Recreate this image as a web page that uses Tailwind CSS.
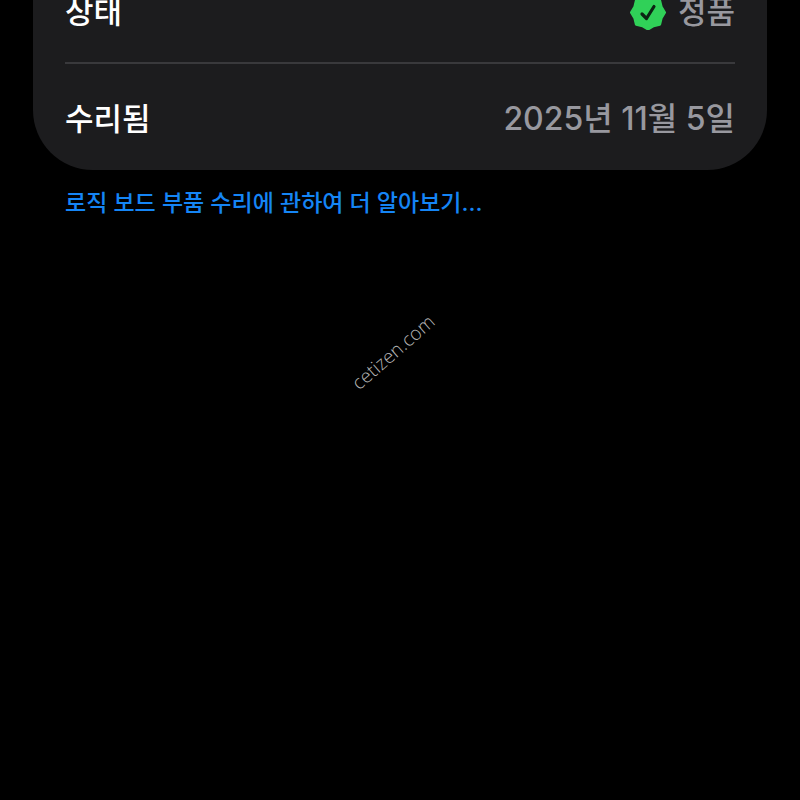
<!DOCTYPE html>
<html lang="ko">

<head>
  <meta charset="UTF-8" />
  <meta name="viewport" content="width=device-width, initial-scale=1.0" />
  <script src="https://cdn.jsdelivr.net/npm/@tailwindcss/browser@4"></script>
  <title>부품 및 서비스 기록</title>
</head>

<body class="relative min-h-screen overflow-hidden bg-black font-['Inter','Noto_Sans_CJK_KR',sans-serif] font-medium text-white">
  <main class="-mt-11 px-[33px]">
    <dl class="rounded-b-[60px] bg-[#1c1c1e] px-8 text-[31px] leading-10">
      <div class="flex items-center justify-between border-b-2 border-[#39393c] pt-9 pb-[30px]">
        <dt>상태</dt>
        <dd class="flex items-center gap-3 text-[#98989f]">
          <svg class="size-9" viewBox="-18 -18.5 36 36" aria-hidden="true">
            <path d="M16.5 0 13.2 5.5 11.7 11.7 5.5 13.2 0 16.5 -5.5 13.2 -11.7 11.7 -13.2 5.5 -16.5 0 -13.2 -5.5 -11.7 -11.7 -5.5 -13.2 0 -16.5 5.5 -13.2 11.7 -11.7 13.2 -5.5Z" fill="#30d158" stroke="#30d158" stroke-width="3" stroke-linejoin="round" />
            <path d="M-6 1.5 -1.5 6 6 -6" fill="none" stroke="#0c2413" stroke-width="3.2" stroke-linecap="round" stroke-linejoin="round" />
          </svg>
          정품
        </dd>
      </div>
      <div class="flex items-center justify-between pt-[35px] pb-[31px]">
        <dt>수리됨</dt>
        <dd class="text-[32px] text-[#98989f]">2025년 11월 5일</dd>
      </div>
    </dl>
    <p class="px-8 pt-[17px] text-[23px] leading-8">
      <a href="#" class="text-[#1585f5]">로직 보드 부품 수리에 관하여 더 알아보기...</a>
    </p>
  </main>
  <!-- watermark -->
  <span class="pointer-events-none absolute top-[338px] left-[340px] w-[106px] -rotate-41 text-center font-['Open_Sans',sans-serif] text-[19px] leading-7 font-light text-[#b4b4b4]">cetizen.com</span>
</body>

</html>
